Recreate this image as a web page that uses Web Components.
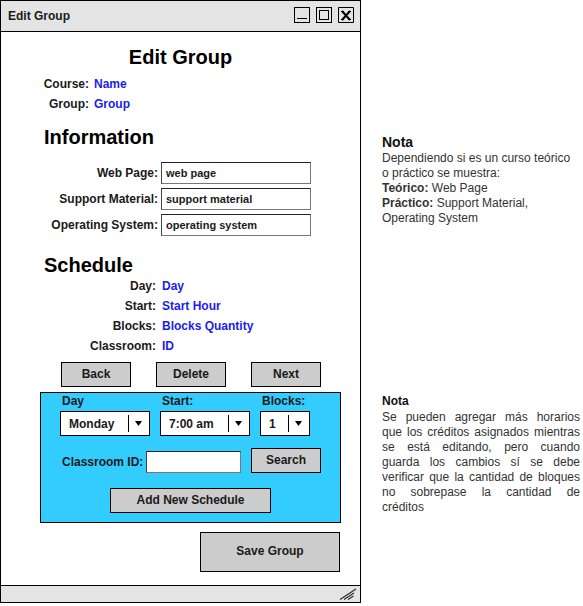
<!DOCTYPE html>
<html lang="en">
<head>
<meta charset="utf-8">
<meta name="viewport" content="width=device-width, initial-scale=1">
<title>Edit Group</title>
<style>
  body { margin: 0; background: #fff; color: #1a1a1a; font: 12px/15px "Liberation Sans", Arial, sans-serif; }
</style>
</head>
<body>
<edit-group-page></edit-group-page>

<script>
const define = (name, html, setup) => {
  const template = document.createElement('template');
  template.innerHTML = '<style>*{box-sizing:border-box}</style>' + html;
  customElements.define(name, class extends HTMLElement {
    constructor() {
      super();
      this.attachShadow({ mode: 'open' }).append(template.content.cloneNode(true));
    }
    connectedCallback() {
      if (setup) setup(this, selector => this.shadowRoot.querySelector(selector));
    }
  });
};

define('app-window', `
  <style>
    :host { display: block; border: 1px solid #000; background: #fff; }
    header { display: flex; align-items: center; justify-content: space-between; height: 31px; padding: 0 6px 0 7px; background: #e4e4e4; border-bottom: 1px solid #000; font-weight: bold; }
    nav { display: flex; gap: 6px; padding-bottom: 2px; }
    button { display: block; width: 16px; height: 16px; padding: 0; border: 0; background: none; color: #000; }
    svg { display: block; fill: none; stroke: currentColor; }
    footer { display: flex; justify-content: flex-end; height: 17px; padding: 2px 3px 0 0; background: #e4e4e4; border-top: 1px solid #000; color: #333; }
  </style>
  <header>
    <span id="title"></span>
    <nav>
      <button aria-label="Minimize"><svg width="16" height="16" shape-rendering="crispEdges"><path d="M.5 .5h15v15H.5zM3 11.500h10"/></svg></button>
      <button aria-label="Maximize"><svg width="16" height="16" shape-rendering="crispEdges"><path d="M.5 .5h15v15H.5zM3.500 3.500h9v9h-9z"/></svg></button>
      <button aria-label="Close"><svg width="16" height="16"><path d="M.5 .5h15v15H.5z"/><path d="M4 4l8 9M12 4l-8 9" stroke-width="2"/><path d="M3 4.500h3M10 4.500h3M3 12.500h3M10 12.500h3"/></svg></button>
    </nav>
  </header>
  <slot></slot>
  <footer><svg width="18" height="13"><path d="M1 11.500L17 1M5 11.500L15 5M9 11.500L14.500 8" stroke-width="1.300"/></svg></footer>
`, (el, $) => { $('#title').textContent = el.getAttribute('heading'); });

define('detail-row', `
  <style>
    :host { display: block; font-weight: bold; line-height: 20px; }
    dl { display: grid; grid-template-columns: var(--label-width) 1fr; gap: var(--label-gap, 5px); margin: 0; }
    dt { text-align: right; white-space: nowrap; }
    dd { margin: 0; color: #1c1cf0; }
  </style>
  <dl><dt></dt><dd><slot></slot></dd></dl>
`, (el, $) => { $('dt').textContent = el.getAttribute('label'); });

define('text-field', `
  <style>
    :host { display: grid; grid-template-columns: var(--label-width, auto) 1fr; gap: 3px; align-items: center; font-weight: bold; }
    label { text-align: right; white-space: nowrap; }
    input { width: 100%; min-width: 0; height: 22px; padding: 0 4px 1px; border: 1px solid #777; border-top-color: #222; border-left-color: #444; border-radius: 0; background: #fff; color: #1a1a1a; font: bold 11px "Liberation Sans", Arial, sans-serif; }
  </style>
  <label for="field"></label><input id="field" type="text">
`, (el, $) => {
  $('label').textContent = el.getAttribute('label');
  $('input').value = el.getAttribute('value') || '';
});

define('select-field', `
  <style>
    :host { display: block; font-weight: bold; }
    label { display: block; padding-left: 2px; line-height: 16px; margin-bottom: 2px; white-space: nowrap; }
    div { display: grid; align-items: center; }
    select, svg { grid-area: 1 / 1; }
    select { appearance: none; width: 100%; height: 25px; padding: 0 22px 0 8px; border: 1px solid #000; border-radius: 0; background: #fff; color: #1a1a1a; font: bold 12px "Liberation Sans", Arial, sans-serif; }
    svg { display: block; justify-self: end; margin-right: 8px; pointer-events: none; }
  </style>
  <label for="choice"></label>
  <div>
    <select id="choice"><option></option></select>
    <svg width="14" height="17"><path d="M.5 0v17" stroke="#000"/><path d="M7 6h7l-3.500 5z"/></svg>
  </div>
`, (el, $) => {
  $('label').textContent = el.getAttribute('label');
  $('option').textContent = el.getAttribute('value');
});

define('push-button', `
  <style>
    :host { display: block; }
    button { display: block; width: 100%; height: var(--button-height, 25px); padding: 0 0 2px; border: 1px solid #000; border-radius: 0; background: #ccc; color: #1a1a1a; font: bold 12px "Liberation Sans", Arial, sans-serif; }
  </style>
  <button type="button"><slot></slot></button>
`);

define('side-note', `
  <style>
    :host { display: block; color: #333; }
    h3 { margin: 0; color: #111; font-size: var(--note-heading, 12px); line-height: 18px; }
  </style>
  <h3>Nota</h3><slot></slot>
`);

define('schedule-editor', `
  <style>
    :host { display: grid; gap: 12px; padding: 0 19px 9px; border: 1px solid #000; background: #3cf; }
    .choices { display: grid; grid-template-columns: 90fr 90fr 50fr 1fr; column-gap: 10px; }
    .room { display: flex; align-items: flex-end; gap: 10px; padding-left: 2px; }
    .room text-field { flex: 1; }
    .room push-button { flex: 0 0 70px; }
    .add { margin: 3px 50px 0; }
  </style>
  <div class="choices">
    <select-field label="Day" value="Monday"></select-field>
    <select-field label="Start:" value="7:00 am"></select-field>
    <select-field label="Blocks:" value="1"></select-field>
  </div>
  <div class="room">
    <text-field label="Classroom ID:"></text-field>
    <push-button>Search</push-button>
  </div>
  <push-button class="add">Add New Schedule</push-button>
`);

define('edit-group-page', `
  <style>
    :host { display: grid; grid-template-columns: 361fr 222fr; align-items: start; }
    h1, h2 { margin: 0; color: #000; font-size: 20px; line-height: 20px; }
    h1 { padding-top: 15px; text-align: center; }
    .content { padding: 7px 19px 13px 39px; }
    h2 { padding: 0 4px; margin: 13px 0 15px; }
    .summary { --label-width: 49px; }
    .info { display: grid; gap: 4px; margin-right: 30px; --label-width: 118px; }
    .schedule { --label-width: 116px; --label-gap: 6px; }
    h2.tight { margin: 19px 0 1px; }
    .actions { display: grid; grid-template-columns: repeat(3, 1fr); gap: 25px; margin: 6px 20px 5px 21px; }
    .save { width: 140px; margin: 9px 1px 0 auto; --button-height: 40px; }
    aside { padding: 133px 3px 0 21px; }
    p { margin: 0; }
    .first { --note-heading: 14px; margin-bottom: 166px; }
    .filled { text-align: justify; text-align-last: justify; }
  </style>
  <app-window heading="Edit Group">
    <h1>Edit Group</h1>
    <div class="content">
      <div class="summary">
        <detail-row label="Course:">Name</detail-row>
        <detail-row label="Group:">Group</detail-row>
      </div>
      <h2>Information</h2>
      <div class="info">
        <text-field label="Web Page:" value="web page"></text-field>
        <text-field label="Support Material:" value="support material"></text-field>
        <text-field label="Operating System:" value="operating system"></text-field>
      </div>
      <h2 class="tight">Schedule</h2>
      <div class="schedule">
        <detail-row label="Day:">Day</detail-row>
        <detail-row label="Start:">Start Hour</detail-row>
        <detail-row label="Blocks:">Blocks Quantity</detail-row>
        <detail-row label="Classroom:">ID</detail-row>
      </div>
      <div class="actions">
        <push-button>Back</push-button>
        <push-button>Delete</push-button>
        <push-button>Next</push-button>
      </div>
      <schedule-editor></schedule-editor>
      <push-button class="save">Save Group</push-button>
    </div>
  </app-window>
  <aside>
    <side-note class="first">
      <p>Dependiendo si es un curso teórico o práctico se muestra:</p>
      <p><b>Teórico:</b> Web Page</p>
      <p><b>Práctico:</b> Support Material,<br>Operating System</p>
    </side-note>
    <side-note class="second">
      <p class="filled">Se pueden agregar más horarios que los créditos asignados mientras se está editando, pero cuando guarda los cambios sí se debe verificar que la cantidad de bloques no sobrepase la cantidad de</p>
      <p>créditos</p>
    </side-note>
  </aside>
`);
</script>
</body>
</html>
